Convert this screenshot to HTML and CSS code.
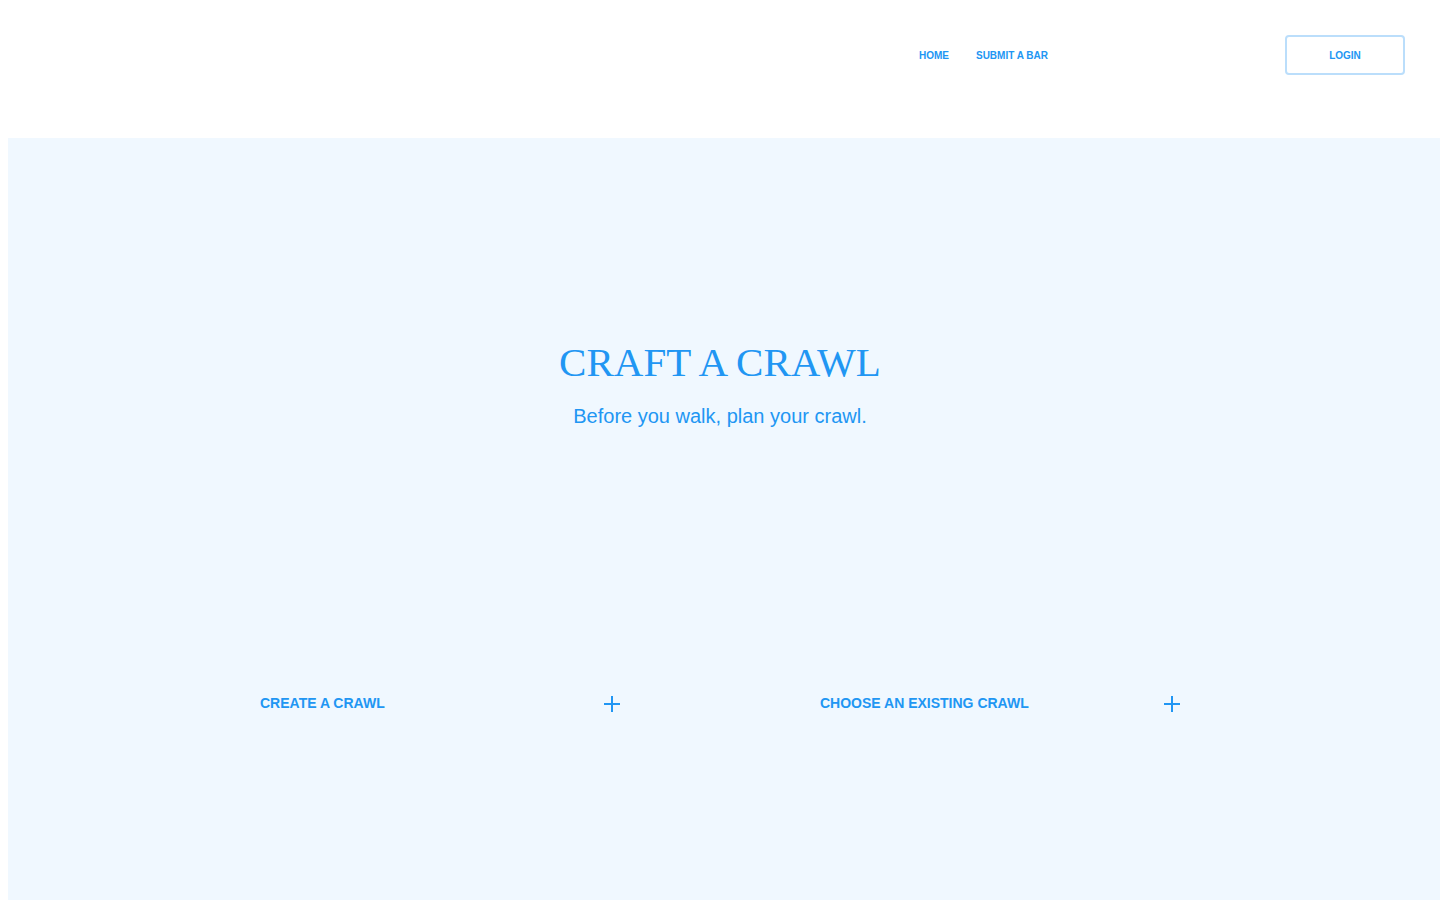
FILE: index.html
```html
<!DOCTYPE html>
<html lang="en">
<head>
<meta charset="utf-8">
<title>Craft a Crawl</title>
<link rel="stylesheet" href="styles.css">
</head>
<body>
<header class="site-header">
  <nav class="nav">
    <a class="nav-link" href="#">HOME</a>
    <a class="nav-link" href="#">SUBMIT A BAR</a>
  </nav>
  <button class="login-btn" type="button">LOGIN</button>
</header>
<main class="hero">
  <h1 class="hero-title">CRAFT A CRAWL</h1>
  <p class="hero-sub">Before you walk, plan your crawl.</p>
  <div class="options">
    <div class="option">
      <span class="option-label">CREATE A CRAWL</span>
      <svg class="plus" width="16" height="16" viewBox="0 0 16 16" aria-hidden="true"><path d="M8 0V16M0 8H16" stroke="#2196f3" stroke-width="2" fill="none"/></svg>
    </div>
    <div class="option">
      <span class="option-label">CHOOSE AN EXISTING CRAWL</span>
      <svg class="plus" width="16" height="16" viewBox="0 0 16 16" aria-hidden="true"><path d="M8 0V16M0 8H16" stroke="#2196f3" stroke-width="2" fill="none"/></svg>
    </div>
  </div>
</main>
</body>
</html>
```
FILE: styles.css
```css
html, body {
  margin: 0;
  padding: 0;
  background: #ffffff;
  overflow: hidden;
}
body {
  font-family: "Liberation Sans", Arial, sans-serif;
  color: #2196f3;
}
.site-header {
  height: 130px;
  box-sizing: border-box;
  margin-top: 8px;
  padding: 27px 35px 0 0;
  display: flex;
  justify-content: flex-end;
  align-items: flex-start;
}
.nav {
  display: flex;
  gap: 27px;
  height: 40px;
  padding-top: 2px;
  box-sizing: border-box;
  align-items: center;
}
.nav-link {
  font-size: 10px;
  font-weight: bold;
  color: #2196f3;
  text-decoration: none;
  line-height: 12px;
}
.login-btn {
  margin-left: 237px;
  width: 120px;
  height: 40px;
  box-sizing: border-box;
  border: 2px solid #bbdefb;
  border-radius: 4px;
  background: #ffffff;
  color: #2196f3;
  font-family: "Liberation Sans", Arial, sans-serif;
  font-size: 10px;
  font-weight: bold;
  padding: 0;
  cursor: pointer;
}
.hero {
  margin-left: 8px;
  height: 762px;
  background: #f0f8ff;
  padding: 201px 8px 0 0;
  box-sizing: border-box;
  display: flex;
  flex-direction: column;
  align-items: center;
}
.hero-title {
  margin: 0;
  font-family: "Liberation Serif", "Times New Roman", serif;
  font-weight: normal;
  font-size: 41px;
  line-height: 47px;
}
.hero-sub {
  margin: 19px 0 0;
  font-size: 20px;
  line-height: 23px;
}
.options {
  margin-top: 267px;
  display: grid;
  grid-template-columns: 360px 360px;
  column-gap: 200px;
}
.option {
  display: flex;
  justify-content: space-between;
  align-items: center;
  height: 16px;
}
.option-label {
  font-size: 14px;
  font-weight: bold;
  line-height: 16px;
}
.plus {
  display: block;
  margin-top: 2px;
}
```
